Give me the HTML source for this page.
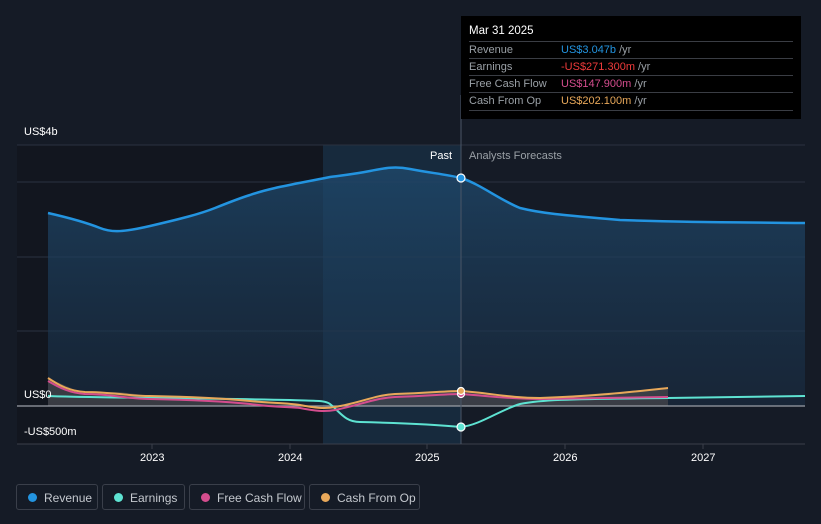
<!DOCTYPE html>
<html><head><style>
body{margin:0;background:#151b26;font-family:"Liberation Sans",sans-serif;}
.wrap{position:relative;width:821px;height:524px;overflow:hidden;background:#151b26;}
.tt{position:absolute;left:461px;top:16px;width:340px;height:103px;background:#000;color:#fff;font-size:11px;}
.tt .h{position:absolute;left:8px;top:9px;font-size:11.5px;}
.row{position:absolute;left:8px;width:324px;height:17px;border-top:1px solid #3a3d44;line-height:17px;color:#9aa0a6;}
.row span{position:absolute;left:92px;}
.lg{position:absolute;top:484px;height:26px;border:1px solid #3a3f4a;border-radius:3px;color:#c4c8ce;font-size:12px;line-height:26px;box-sizing:border-box;}
.lg i{position:absolute;left:11px;top:8px;width:9px;height:9px;border-radius:50%;}
.lg b{font-weight:normal;position:absolute;left:27px;}
.ax{position:absolute;color:#fff;font-size:11px;}
</style></head><body><div class="wrap">
<svg width="821" height="524" style="position:absolute;left:0;top:0">
<defs><linearGradient id="rg" x1="0" y1="0" x2="0" y2="1"><stop offset="0" stop-color="#1f4a6e" stop-opacity=".75"/><stop offset="1" stop-color="#1a3048" stop-opacity=".5"/></linearGradient></defs>
<rect x="17" y="145" width="306" height="299" fill="#12161f"/>
<rect x="323" y="145" width="138" height="299" fill="#172a3d"/>
<g stroke="#2a3140" stroke-width="1">
<line x1="17" y1="145" x2="805" y2="145"/><line x1="17" y1="182" x2="805" y2="182"/><line x1="17" y1="257" x2="805" y2="257"/><line x1="17" y1="331" x2="805" y2="331"/><line x1="17" y1="444" x2="805" y2="444" stroke="#3a3f4a"/>
</g>
<path d="M48,213 C70,218 85,222 100,228 C110,232 120,233 150,226 C180,219 200,214 215,208 C230,202 240,198 250,195 C270,188 290,185 330,177 C345,175 355,174 370,171 C385,168 395,166 410,169 C430,173 445,174 461,178 C480,184 500,200 520,208 C540,213 560,215 620,220 C680,222 700,222 805,223 L805,406 L48,406Z" fill="url(#rg)"/>
<path d="M48,213 C70,218 85,222 100,228 C110,232 120,233 150,226 C180,219 200,214 215,208 C230,202 240,198 250,195 C270,188 290,185 330,177 C345,175 355,174 370,171 C385,168 395,166 410,169 C430,173 445,174 461,178 C480,184 500,200 520,208 C540,213 560,215 620,220 C680,222 700,222 805,223" fill="none" stroke="#2394e0" stroke-width="2.5"/>
<path d="M48,378 L80,392 L120,392 L150,396 L250,400 L290,403 L323,408 L360,402 L390,394 L461,391 L500,395 L540,398 L668,388 L668,406 L48,406Z" fill="#7a6a60" opacity=".35"/>
<line x1="17" y1="406" x2="805" y2="406" stroke="#9a9ea6" stroke-width="1.2"/>
<line x1="461" y1="95" x2="461" y2="444" stroke="#4a5566"/>
<path d="M48,396 C100,398 200,398 290,400 C315,401 325,400 330,404 C340,412 345,422 360,422 C400,423 430,424 461,427 C480,425 500,410 520,404 C540,400 560,399 668,398 L805,396" fill="none" stroke="#5ee3d2" stroke-width="2"/>
<path d="M48,381 C60,388 70,393 85,394 C110,394 130,399 150,399 C200,400 230,402 250,404 C270,407 290,407 300,408 C315,411 325,412 335,410 C360,405 375,398 395,397 C430,396 445,394 461,394 C490,396 510,399 540,399 L668,397" fill="none" stroke="#d44d8e" stroke-width="2"/>
<path d="M48,378 C60,386 70,391 85,392 C110,392 130,396 150,396 C200,397 230,399 250,401 C270,403 290,403 300,405 C315,408 325,409 335,407 C360,403 375,395 395,394 C430,393 445,391 461,391 C490,393 510,398 540,398 C600,396 640,391 668,388" fill="none" stroke="#e8a85a" stroke-width="2"/>
<circle cx="461" cy="178" r="4" fill="#2394e0" stroke="#fff" stroke-width="1.2"/>
<circle cx="461" cy="427" r="4" fill="#5ee3d2" stroke="#fff" stroke-width="1.2"/>
<circle cx="461" cy="394" r="3.5" fill="#d44d8e" stroke="#fff" stroke-width="1.2"/>
<circle cx="461" cy="391" r="3.5" fill="#e8a85a" stroke="#fff" stroke-width="1.2"/>
<g stroke="#3a3f4a"><line x1="152" y1="444" x2="152" y2="449"/><line x1="290" y1="444" x2="290" y2="449"/><line x1="427" y1="444" x2="427" y2="449"/><line x1="565" y1="444" x2="565" y2="449"/><line x1="703" y1="444" x2="703" y2="449"/></g>
</svg>
<div class="ax" style="left:24px;top:126px">US$4b</div>
<div class="ax" style="left:24px;top:389px">US$0</div>
<div class="ax" style="left:24px;top:426px">-US$500m</div>
<div class="ax" style="left:430px;top:150px">Past</div>
<div class="ax" style="left:469px;top:150px;color:#9aa0a6">Analysts Forecasts</div>
<div class="ax" style="left:140px;top:452px">2023</div>
<div class="ax" style="left:278px;top:452px">2024</div>
<div class="ax" style="left:415px;top:452px">2025</div>
<div class="ax" style="left:553px;top:452px">2026</div>
<div class="ax" style="left:691px;top:452px">2027</div>
<div class="tt"><div class="h">Mar 31 2025</div>
<div class="row" style="top:25px">Revenue<span style="color:#2394e0">US$3.047b <em style="font-style:normal;color:#9aa0a6">/yr</em></span></div>
<div class="row" style="top:42px">Earnings<span style="color:#ef3b3b">-US$271.300m <em style="font-style:normal;color:#9aa0a6">/yr</em></span></div>
<div class="row" style="top:59px">Free Cash Flow<span style="color:#d44d8e">US$147.900m <em style="font-style:normal;color:#9aa0a6">/yr</em></span></div>
<div class="row" style="top:76px;border-bottom:1px solid #3a3d44">Cash From Op<span style="color:#e8a85a">US$202.100m <em style="font-style:normal;color:#9aa0a6">/yr</em></span></div>
</div>
<div class="lg" style="left:16px;width:82px"><i style="background:#2394e0"></i><b>Revenue</b></div>
<div class="lg" style="left:102px;width:83px"><i style="background:#5ee3d2"></i><b>Earnings</b></div>
<div class="lg" style="left:189px;width:116px"><i style="background:#d44d8e"></i><b>Free Cash Flow</b></div>
<div class="lg" style="left:309px;width:111px"><i style="background:#e8a85a"></i><b>Cash From Op</b></div>
</div></body></html>
